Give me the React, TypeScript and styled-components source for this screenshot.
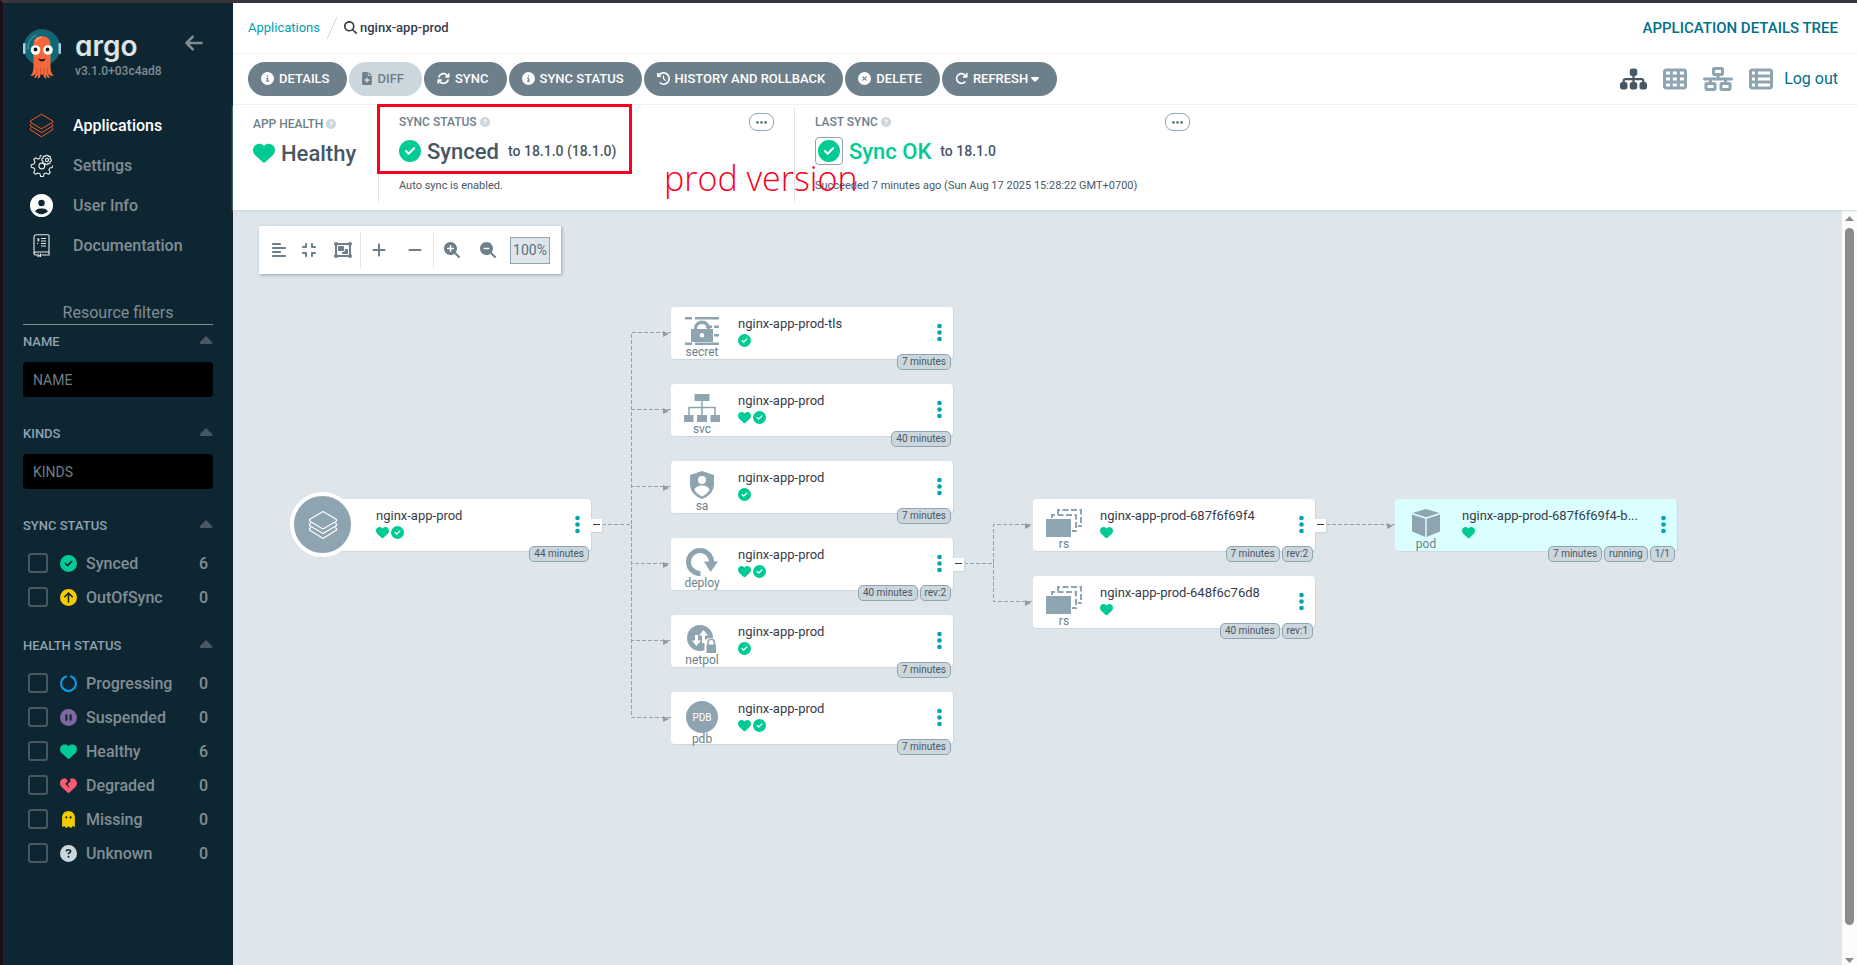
import React, { ReactNode } from 'react';
import styled, { createGlobalStyle } from 'styled-components';
import {
  FaAlignLeft,
  FaArrowLeft,
  FaArrowRotateRight,
  FaArrowsRotate,
  FaCaretDown,
  FaCircleArrowUp,
  FaCircleCheck,
  FaCircleInfo,
  FaCirclePause,
  FaCircleQuestion,
  FaCircleUser,
  FaCircleXmark,
  FaClockRotateLeft,
  FaCompress,
  FaEllipsis,
  FaFileMedical,
  FaGhost,
  FaHeart,
  FaHeartCrack,
  FaMagnifyingGlass,
  FaMagnifyingGlassMinus,
  FaMagnifyingGlassPlus,
  FaMinus,
  FaNetworkWired,
  FaObjectGroup,
  FaPlus,
  FaSitemap,
  FaTableCells,
  FaTableList,
} from 'react-icons/fa6';

const GREEN = '#00cb94';
const SLATE = '#8fa4b1';
const STEEL = '#6d7f8b';
const TEAL = '#00a2b3';

const GlobalStyle = createGlobalStyle`
  * { box-sizing: border-box; }
  body {
    margin: 0;
    font-family: Roboto, "Liberation Sans", sans-serif;
    font-size: 13px;
    color: #363c4a;
    background: #dee6eb;
  }
  button, input { font-family: inherit; }
  svg { flex: none; }
`;

const Page = styled.div`
  display: flex;
  height: 100vh;
  border-top: 3px solid #38353c;
  border-left: 3px solid #1d0f17;
`;

/* ---------- Sidebar ---------- */

const Sidebar = styled.aside`
  flex: none;
  width: 230px;
  padding: 26px 20px 0;
  background: #0e2632;
  color: #818d94;
`;

const Brand = styled.div`
  display: flex;
  height: 50px;
  gap: 14px;
  margin-bottom: 26px;
`;

const BrandText = styled.div`
  flex: 1;
`;

const Wordmark = styled.div`
  font-family: Inter, sans-serif;
  font-feature-settings: "cv11" 1, "ss03" 1;
  font-size: 28px;
  font-weight: 600;
  line-height: 35px;
  color: #dee3e3;
`;

const Version = styled.div`
  font-size: 12px;
  font-weight: 500;
  line-height: 14px;
`;

const CollapseButton = styled.button`
  align-self: flex-start;
  display: flex;
  margin: 4px 9px 0 0;
  padding: 0;
  border: 0;
  background: none;
  color: #818d94;
  font-size: 20px;
`;

const NavLink = styled.a<{ $active?: boolean }>`
  display: flex;
  align-items: center;
  gap: 14px;
  height: 40px;
  font-size: 16px;
  font-weight: 500;
  text-decoration: none;
  color: ${(p) => (p.$active ? '#fff' : '#818d94')};
`;

const NavIcon = styled.span`
  display: flex;
  justify-content: center;
  width: 36px;
  color: #fff;
`;

const FiltersTitle = styled.h2`
  margin: 36px 0 6px;
  border-bottom: 1px solid #818d94;
  font-size: 16px;
  font-weight: 400;
  line-height: 23px;
  text-align: center;
`;

const FilterSection = styled.section<{ $gap: number }>`
  margin-bottom: ${(p) => p.$gap}px;
`;

const FilterHeader = styled.div`
  display: flex;
  justify-content: space-between;
  height: 20px;
  margin-bottom: 11px;
  font-size: 13px;
  font-weight: 500;
  line-height: 22px;
  color: #8fa4b1;
`;

const FilterInput = styled.input`
  display: block;
  width: 100%;
  height: 35px;
  padding: 0 10px;
  border: 0;
  border-radius: 4px;
  background: #000;
  color: #fff;
  font-size: 14px;
  &::placeholder { color: #6d7f8b; opacity: 1; }
`;

const FilterRow = styled.label`
  display: flex;
  align-items: center;
  height: 34px;
  padding: 0 5px;
  font-size: 16px;
  font-weight: 500;
`;

const Checkbox = styled.input`
  appearance: none;
  width: 20px;
  height: 20px;
  margin: 0 12px 0 0;
  border: 2px solid #495763;
  border-radius: 3px;
`;

const FilterIcon = styled.span<{ $color: string }>`
  display: flex;
  justify-content: center;
  width: 17px;
  margin-right: 9px;
  font-size: 17px;
  color: ${(p) => p.$color};
`;

const FilterCount = styled.span`
  margin-left: auto;
`;

/* ---------- Header ---------- */

const Main = styled.main`
  flex: 1;
  display: flex;
  flex-direction: column;
  min-width: 0;
  background: #fff;
`;

const Bar = styled.div`
  display: flex;
  align-items: center;
  justify-content: space-between;
  flex: none;
  height: 51px;
  padding: 0 19px 1px 15px;
  border-bottom: 1px solid #eff3f5;
`;

const Crumbs = styled.nav`
  display: flex;
  align-items: center;
  font-weight: 500;
  color: #363c4a;
`;

const CrumbLink = styled.a`
  color: ${TEAL};
  font-weight: 400;
  text-decoration: none;
`;

const CrumbCurrent = styled.span`
  display: flex;
  align-items: center;
  gap: 3px;
`;

const PageTitle = styled.h1`
  margin: 0;
  font-size: 15px;
  font-weight: 500;
  color: #006f8a;
`;

const Actions = styled.div`
  display: flex;
  gap: 2px;
`;

const ActionButton = styled.button<{ $muted?: boolean; $icon?: number }>`
  display: flex;
  align-items: center;
  gap: 5px;
  height: 34px;
  padding: 0 18px 0 13px;
  border: 0;
  border-radius: 17px;
  background: ${(p) => (p.$muted ? '#ccd6dd' : STEEL)};
  color: ${(p) => (p.$muted ? STEEL : '#fff')};
  font-size: 13px;
  font-weight: 500;
  & > svg { width: ${(p) => p.$icon ?? 13}px; }
`;

const ActionLabel = styled.span`
  display: flex;
  align-items: center;
  gap: 3px;
  svg { width: 8px; }
`;

const Views = styled.div`
  display: flex;
  align-items: center;
  gap: 16px;
`;

const ViewButton = styled.button<{ $icon: number; $active?: boolean }>`
  display: flex;
  padding: 0;
  border: 0;
  background: none;
  color: ${(p) => (p.$active ? '#495763' : SLATE)};
  svg { width: ${(p) => p.$icon}px; height: 24px; }
`;

const LogOut = styled.a`
  margin-left: -5px;
  font-size: 16px;
  color: #006f8a;
  text-decoration: none;
`;

/* ---------- Status panel ---------- */

const StatusPanel = styled.section`
  position: relative;
  z-index: 1;
  flex: none;
  display: flex;
  height: 105px;
  padding: 3px 0 8px 20px;
  box-shadow: 0 1px 2px #ccd6dd;
  background: #fff;
`;

const StatusItem = styled.div<{ $width: number; $top?: number }>`
  position: relative;
  width: ${(p) => p.$width}px;
  padding-top: ${(p) => p.$top ?? 5}px;
  & + & {
    padding-left: 20px;
    border-left: 1px solid #dee6eb;
  }
`;

const StatusLabel = styled.div`
  display: flex;
  align-items: center;
  gap: 3px;
  height: 18px;
  font-size: 12px;
  font-weight: 500;
  color: ${STEEL};
  svg { color: #ccd6dd; font-size: 10px; }
`;

const StatusValue = styled.div<{ $color?: string }>`
  display: flex;
  align-items: center;
  gap: 6px;
  height: 28px;
  margin-top: 6px;
  font-size: 22px;
  font-weight: 500;
  color: ${(p) => p.$color ?? '#495763'};
  white-space: nowrap;
`;

const Revision = styled.span`
  padding-left: 3px;
  font-size: 14px;
  color: #495763;
`;

const StatusNote = styled.div`
  margin-top: 13px;
  font-size: 11px;
  line-height: 16px;
  color: #495763;
`;

const IconFrame = styled.span`
  display: flex;
  align-items: center;
  justify-content: center;
  width: 28px;
  height: 28px;
  border: 1px solid ${SLATE};
  border-radius: 4px;
`;

const MoreButton = styled.button`
  position: absolute;
  top: 5px;
  right: 20px;
  display: flex;
  align-items: center;
  justify-content: center;
  width: 25px;
  height: 18px;
  padding: 0;
  border: 1px solid ${SLATE};
  border-radius: 8px;
  background: #fff;
  color: ${STEEL};
  font-size: 13px;
`;

const Highlight = styled.div`
  position: absolute;
  left: 144px;
  top: -1px;
  width: 255px;
  height: 70px;
  border: 3px solid #fb0021;
`;

const Annotation = styled.div`
  position: absolute;
  left: 431px;
  top: 49px;
  font-family: "Open Sans", "Noto Sans", sans-serif;
  font-size: 34px;
  font-weight: 300;
  line-height: 48px;
  white-space: nowrap;
  color: #fb0021;
`;

/* ---------- Tree canvas ---------- */

const Workspace = styled.div`
  flex: 1;
  display: flex;
  min-height: 0;
`;

const Canvas = styled.div`
  position: relative;
  flex: 1;
  overflow: hidden;
  background: #dee6eb;
`;

const ZoomBar = styled.div`
  display: inline-flex;
  align-items: center;
  height: 48px;
  margin: 16px 26px;
  padding: 0 11px 0 6px;
  background: #fff;
  box-shadow: 1px 1px 3px ${SLATE};
`;

const ZoomGroup = styled.div`
  display: flex;
  & + & { border-left: 1px solid #dee6eb; }
`;

const ToolButton = styled.button<{ $width: number; $icon?: number }>`
  display: flex;
  align-items: center;
  justify-content: center;
  width: ${(p) => p.$width}px;
  height: 36px;
  padding: 0 0 1px;
  border: 0;
  background: none;
  color: ${STEEL};
  svg { width: ${(p) => p.$icon ?? 16}px; height: 16px; }
`;

const ZoomValue = styled.output`
  width: 40px;
  height: 27px;
  margin-left: 4px;
  border: 1px solid ${SLATE};
  background: #dee6eb;
  color: #5d6f7b;
  font-size: 14px;
  line-height: 24px;
  text-align: center;
`;

const Edges = styled.svg`
  position: absolute;
  left: 0;
  top: 0;
`;

const Node = styled.article<{ $x: number; $y: number; $tint?: boolean }>`
  position: absolute;
  left: ${(p) => p.$x}px;
  top: ${(p) => p.$y}px;
  display: flex;
  width: 282px;
  height: 52px;
  border-radius: 4px;
  background: ${(p) => (p.$tint ? '#dbfffe' : '#fff')};
  box-shadow: 1px 1px 1px #ccd6dd;
`;

const KindColumn = styled.div`
  display: flex;
  flex-direction: column;
  align-items: center;
  width: 62px;
  padding-top: 10px;
  font-size: 12px;
  line-height: 14px;
  color: ${STEEL};
`;

const KindIcon = styled.span`
  display: flex;
  align-items: center;
  justify-content: center;
  height: 30px;
`;

const AppCircle = styled.div`
  position: absolute;
  left: -19px;
  top: -7px;
  display: flex;
  align-items: center;
  justify-content: center;
  width: 65px;
  height: 65px;
  border: 4px solid #fff;
  border-radius: 50%;
  background: ${SLATE};
`;

const NodeBody = styled.div<{ $indent: number }>`
  flex: 1;
  min-width: 0;
  padding: 8px 24px 0 ${(p) => p.$indent}px;
`;

const NodeTitle = styled.div`
  white-space: nowrap;
  font-size: 13px;
  line-height: 17px;
  color: #363c4a;
`;

const NodeHealth = styled.div`
  display: flex;
  gap: 2px;
  padding-top: 2px;
  font-size: 13px;
  color: ${GREEN};
`;

const Kebab = styled.button`
  position: absolute;
  right: 9px;
  top: 15px;
  display: flex;
  padding: 0;
  border: 0;
  background: none;
`;

const Expander = styled.button`
  position: absolute;
  left: 282px;
  top: 20px;
  display: flex;
  align-items: center;
  justify-content: center;
  width: 11px;
  height: 13px;
  padding: 0 0 2px;
  border: 0;
  background: #fff;
  box-shadow: 1px 1px 1px #ccd6dd;
  color: #363c4a;
`;

const Tags = styled.div`
  position: absolute;
  right: 2px;
  bottom: -11px;
  display: flex;
  gap: 2px;
`;

const Tag = styled.span`
  height: 16px;
  padding: 0 4px;
  border: 1px solid ${SLATE};
  border-radius: 5px;
  background: #ccd6dd;
  color: #495763;
  font-size: 10px;
  line-height: 14px;
`;

const Scrollbar = styled.div`
  flex: none;
  display: flex;
  flex-direction: column;
  align-items: center;
  justify-content: space-between;
  width: 15px;
  padding: 6px 0 2px;
  background: #fcfcfc;
`;

const Thumb = styled.div`
  flex: 1;
  width: 9px;
  margin: 7px 0 33px;
  border-radius: 5px;
  background: #8b8b8b;
`;

/* ---------- Drawings ---------- */

const Mascot = () => (
  <svg width="38" height="50" viewBox="0 0 38 50">
    <circle cx="19" cy="18.5" r="18" fill="#0d6a75" stroke="#2b5268" strokeWidth="1" />
    <path d="M5 20A14.500 14.500 0 0 1 13 6" fill="none" stroke="#4d9aa3" strokeWidth="1.300" />
    <rect x="0" y="14" width="2.500" height="11" rx="1" fill="#a9cbe6" />
    <rect x="35.500" y="14" width="2.500" height="11" rx="1" fill="#a9cbe6" />
    <path
      d="M19 7c-5 0-8.500 3.500-8.500 8.500V37c0 5-1 8-3 9.500 2 1 4 0 5-2 0 2-.5 3.500-2 4.500 2.500.5 4-1 4.500-3.500.2 1.500 0 3-.5 4 2 0 3-1.500 3-4h3c0 2.500 1 4 3 4-.5-1-.7-2.500-.5-4 .5 2.500 2 4 4.500 3.500-1.500-1-2-2.500-2-4.500 1 2 3 3 5 2-2-1.500-3-4.500-3-9.500V15.500C27.500 10.500 24 7 19 7z"
      fill="#f4693c"
    />
    <path d="M13 12c1-2.500 3-3.500 5-3.500" fill="none" stroke="#fba07f" strokeWidth="1.500" strokeLinecap="round" />
    <path d="M14 39v6M17.500 39v6M21 39v6M24.500 39v6" stroke="#c9431d" strokeWidth=".7" />
    <circle cx="12.500" cy="21" r="4.800" fill="#fff" />
    <circle cx="25" cy="21" r="4.800" fill="#fff" />
    <circle cx="12.500" cy="20.500" r="1.900" fill="#161616" />
    <circle cx="24.500" cy="20.500" r="1.900" fill="#161616" />
    <path d="M15.500 29.500c1.500 1 5.500 1 7 0-.5 4-6.500 4-7 0z" fill="#1d1112" />
  </svg>
);

const Layers = ({ color, width }: { color: string; width: number }) => (
  <svg width={width} height={width} viewBox="0 0 30 30" fill="none" stroke={color} strokeWidth="1.200" strokeLinejoin="round">
    <path d="M15 1.500 28.500 9.500v1.500L15 19 1.500 11V9.500z" />
    <path d="M3 13 1.500 14v1.500L15 23.500l13.500-8V14L27 13" />
    <path d="M3 17.500 1.500 18.500V20L15 28.500 28.500 20v-1.500L27 17.500" />
  </svg>
);

const Gears = () => (
  <svg width="23" height="23" viewBox="0 0 23 23" fill="none" stroke="#e6e9ea" strokeWidth="1.100" strokeLinejoin="round">
    <path d="M8 5.200 5.500 3.800 3.800 5.500 5 8 4 10 1.200 10.700v2.600l2.800.8 1 2L3.700 18.500l1.800 1.800L8 19l2 .8.700 2.700h2.600l.7-2.700 2-.9 2.500 1.400 1.800-1.800L18.900 16l.9-2 2.500-.5v-2" />
    <circle cx="11.800" cy="12" r="2.900" />
    <path d="M8 5.200 9.800 4.300 10.300 1.500h1.200" />
    <circle cx="17" cy="6" r="1.600" />
    <path d="m16.200 1.200 1.600 0 .4 1.300 1.500-.4.900 1.200-.8 1.400 1.500.8v1.400l-1.500.5.500 1.500-1.200 1-1.200-.6-.8 1.400h-1.500l-.5-1.400-1.500.5-1-1.200.7-1.200-1.400-.9V4.800l1.400-.5-.4-1.500 1.200-.9 1.300.6z" />
  </svg>
);

const Manual = () => (
  <svg width="17" height="23" viewBox="0 0 17 23" fill="none" stroke="#e6e9ea" strokeWidth="1.100">
    <path d="M3 .8h12a1 1 0 0 1 1 1V18H3A2 2 0 0 0 1 20V3A2.200 2.200 0 0 1 3 .8z" />
    <path d="M1 19.500c0 1 .8 1.500 2 1.500h1.500m4 0H16v-3" />
    <path d="M5 19.500v3l1.200-.9 1.300.9v-3" />
    <path d="M8 4.500h5M8 7h5M8 9.500h5M8 12h5M4 5h1.800v1.500l-1.200.8M4.700 9v1" />
  </svg>
);

const CaretUp = () => (
  <svg width="14" height="8" viewBox="0 0 14 8" style={{ marginTop: 5 }}>
    <path d="M7 0 13.500 6.500Q13.500 8 12 8H2Q.5 8 .5 6.500z" fill="#495763" />
  </svg>
);

const ProgressRing = () => (
  <svg width="17" height="17" viewBox="0 0 17 17" fill="none" stroke="#0d9de6" strokeWidth="2">
    <path d="M10.300 1.300a7.400 7.400 0 1 1-3.600 0" />
  </svg>
);

const MinusBar = () => (
  <svg width="7" height="1" viewBox="0 0 7 1"><path d="M0 0h7v1H0z" fill="#363c4a" /></svg>
);

const KebabDots = () => (
  <svg width="9" height="20" viewBox="0 0 9 20" fill={TEAL}>
    <circle cx="4.500" cy="4" r="2.300" />
    <circle cx="4.500" cy="10.500" r="2.300" />
    <circle cx="4.500" cy="17" r="2.300" />
  </svg>
);

type Kind = 'secret' | 'svc' | 'sa' | 'deploy' | 'netpol' | 'pdb' | 'rs' | 'pod';

const kindArt: Record<Kind, ReactNode> = {
  secret: (
    <svg width="34" height="28" viewBox="0 0 34 28" fill={SLATE}>
      <path d="M0 0h7v2.500H0zM10 0h24v2.500H10zM0 25.500h7V28H0zM10 25.500h24V28H10zM29 8.500h5V11h-5zM29 17h5v2.500h-5zM21 8.500h6V11h-6z" />
      <path d="M9 12v-1a8 7.500 0 0 1 16 0v1h-3v-.5a5 4.500 0 0 0-10 0v.5z" />
      <path fillRule="evenodd" d="M6 12h22v13H6zm11 4a2.300 2.300 0 1 0 0 4.600 2.300 2.300 0 0 0 0-4.600z" />
    </svg>
  ),
  svc: (
    <svg width="36" height="28" viewBox="0 0 36 28" fill={SLATE}>
      <path d="M10.500 0h15v7h-15zM0 21h9.500v7H0zM13 21h10v7H13zM26.500 21H36v7h-9.500z" />
      <path d="M18 7v14M5 21v-7.500h26V21" fill="none" stroke={SLATE} strokeWidth="1.500" />
    </svg>
  ),
  sa: (
    <svg width="24" height="28" viewBox="0 0 24 28">
      <path d="M12 0 24 4v9c0 8-5.500 12.500-12 15C5.500 25.500 0 21 0 13V4z" fill={SLATE} />
      <circle cx="12" cy="9" r="4" fill="#fff" />
      <path d="M12 14.500c4.500 0 7.500 2.500 7.500 4.500-1.500 3-4.500 5-7.500 6.500-3-1.500-6-3.500-7.500-6.500 0-2 3-4.500 7.500-4.500z" fill="#fff" />
    </svg>
  ),
  deploy: (
    <svg width="32" height="28" viewBox="0 0 32 28">
      <path d="M14.500 25.500A11.500 11.500 0 1 1 25.500 14" fill="none" stroke={SLATE} strokeWidth="5" />
      <path d="M18 13.500h14L24.500 24z" fill={SLATE} />
    </svg>
  ),
  netpol: (
    <svg width="30" height="28" viewBox="0 0 30 28">
      <circle cx="13" cy="13" r="13" fill={SLATE} />
      <path d="M16.500 5 21 10.500h-3V18h-3v-7.500h-3zM9.500 21 5 15.500h3V10h3v5.500h3z" fill="#fff" />
      <path d="M17.500 28V17.500c0-6 12-6 12 0V28z" fill="#fff" />
      <path d="M19.500 19.500h9.500V28h-9.500z" fill={SLATE} />
      <path d="M21 20v-2.500a3.200 3.200 0 0 1 6.400 0V20" fill="none" stroke={SLATE} strokeWidth="1.600" />
    </svg>
  ),
  pdb: (
    <svg width="32" height="32" viewBox="0 0 32 32">
      <circle cx="16" cy="16" r="16" fill={SLATE} />
      <text x="16" y="20" textAnchor="middle" fontSize="10" fill="#fff">PDB</text>
    </svg>
  ),
  rs: (
    <svg width="36" height="28" viewBox="0 0 36 28">
      <path d="M0 10h25v18H0z" fill={SLATE} />
      <g fill="none" stroke={SLATE} strokeWidth="2" strokeDasharray="6 2.500">
        <path d="M6 9V6h24v16h-4" />
        <path d="M12 5V1h23v16h-3" />
      </g>
    </svg>
  ),
  pod: (
    <svg width="28" height="28" viewBox="0 0 28 28" fill={SLATE}>
      <path d="M14 0 27.500 4 14 8.300.5 4zM0 5.500l13.300 4.300V28L0 22.500zM28 5.500 14.700 9.800V28L28 22.500z" />
    </svg>
  ),
};

/* ---------- Data ---------- */

interface NodeData {
  x: number;
  y: number;
  title: string;
  kind?: Kind;
  healthy?: boolean;
  synced?: boolean;
  tags: string[];
  expandable?: boolean;
}

const APP = 'nginx-app-prod';

const nodes: NodeData[] = [
  { x: 76, y: 289, title: APP, healthy: true, synced: true, tags: ['44 minutes'], expandable: true },
  { x: 438, y: 97, title: `${APP}-tls`, kind: 'secret', synced: true, tags: ['7 minutes'] },
  { x: 438, y: 174, title: APP, kind: 'svc', healthy: true, synced: true, tags: ['40 minutes'] },
  { x: 438, y: 251, title: APP, kind: 'sa', synced: true, tags: ['7 minutes'] },
  { x: 438, y: 328, title: APP, kind: 'deploy', healthy: true, synced: true, tags: ['40 minutes', 'rev:2'], expandable: true },
  { x: 438, y: 405, title: APP, kind: 'netpol', synced: true, tags: ['7 minutes'] },
  { x: 438, y: 482, title: APP, kind: 'pdb', healthy: true, synced: true, tags: ['7 minutes'] },
  { x: 800, y: 289, title: `${APP}-687f6f69f4`, kind: 'rs', healthy: true, tags: ['7 minutes', 'rev:2'], expandable: true },
  { x: 800, y: 366, title: `${APP}-648f6c76d8`, kind: 'rs', healthy: true, tags: ['40 minutes', 'rev:1'] },
  { x: 1162, y: 289, title: `${APP}-687f6f69f4-b...`, kind: 'pod', healthy: true, tags: ['7 minutes', 'running', '1/1'] },
];

const edges: [number, number][] = [[0, 1], [0, 2], [0, 3], [0, 4], [0, 5], [0, 6], [4, 7], [4, 8], [7, 9]];

const syncFilters = [
  { label: 'Synced', count: 6, color: GREEN, icon: <FaCircleCheck /> },
  { label: 'OutOfSync', count: 0, color: '#f5cc00', icon: <FaCircleArrowUp /> },
];

const healthFilters = [
  { label: 'Progressing', count: 0, color: '#0d9de6', icon: <ProgressRing /> },
  { label: 'Suspended', count: 0, color: '#8067a0', icon: <FaCirclePause /> },
  { label: 'Healthy', count: 6, color: GREEN, icon: <FaHeart /> },
  { label: 'Degraded', count: 0, color: '#fb5a72', icon: <FaHeartCrack /> },
  { label: 'Missing', count: 0, color: '#f5cc00', icon: <FaGhost /> },
  { label: 'Unknown', count: 0, color: '#ccd6dd', icon: <FaCircleQuestion /> },
];

/* ---------- Components ---------- */

const FilterList = ({ items }: { items: typeof syncFilters }) => (
  <>
    {items.map((f) => (
      <FilterRow key={f.label}>
        <Checkbox type="checkbox" />
        <FilterIcon $color={f.color}>{f.icon}</FilterIcon>
        {f.label}
        <FilterCount>{f.count}</FilterCount>
      </FilterRow>
    ))}
  </>
);

const TreeNode = ({ data }: { data: NodeData }) => (
  <Node $x={data.x} $y={data.y} $tint={data.kind === 'pod'}>
    {data.kind ? (
      <KindColumn>
        <KindIcon>{kindArt[data.kind]}</KindIcon>
        {data.kind}
      </KindColumn>
    ) : (
      <AppCircle>
        <Layers color="#fff" width={30} />
      </AppCircle>
    )}
    <NodeBody $indent={data.kind ? 5 : 67}>
      <NodeTitle>{data.title}</NodeTitle>
      <NodeHealth>
        {data.healthy && <FaHeart />}
        {data.synced && <FaCircleCheck />}
      </NodeHealth>
    </NodeBody>
    <Kebab aria-label="Resource actions"><KebabDots /></Kebab>
    {data.expandable && <Expander aria-label="Collapse children"><MinusBar /></Expander>}
    <Tags>
      {data.tags.map((t) => <Tag key={t}>{t}</Tag>)}
    </Tags>
  </Node>
);

const TreeEdges = () => (
  <Edges width="1240" height="560" fill="none">
    {edges.map(([a, b]) => {
      const x1 = nodes[a].x + 293;
      const y1 = nodes[a].y + 25.5;
      const mid = nodes[a].x + 322.5;
      const x2 = nodes[b].x;
      const y2 = nodes[b].y + 25.5;
      return (
        <g key={`${a}-${b}`}>
          <path d={`M${x1} ${y1}H${mid}V${y2}H${x2}`} stroke={SLATE} strokeDasharray="4 2" />
          <path d={`M${x2 - 8} ${y2 - 1.5}l6 3-6 3z`} fill="#999" />
        </g>
      );
    })}
  </Edges>
);

export default function App() {
  return (
    <>
      <GlobalStyle />
      <Page>
        <Sidebar>
          <Brand>
            <Mascot />
            <BrandText>
              <Wordmark>argo</Wordmark>
              <Version>v3.1.0+03c4ad8</Version>
            </BrandText>
            <CollapseButton aria-label="Collapse sidebar"><FaArrowLeft /></CollapseButton>
          </Brand>
          <nav>
            <NavLink href="#applications" $active>
              <NavIcon><Layers color="#ef5b2f" width={25} /></NavIcon>Applications
            </NavLink>
            <NavLink href="#settings"><NavIcon><Gears /></NavIcon>Settings</NavLink>
            <NavLink href="#user"><NavIcon><FaCircleUser size={23} /></NavIcon>User Info</NavLink>
            <NavLink href="#docs"><NavIcon><Manual /></NavIcon>Documentation</NavLink>
          </nav>
          <FiltersTitle>Resource filters</FiltersTitle>
          <FilterSection $gap={26}>
            <FilterHeader>NAME<CaretUp /></FilterHeader>
            <FilterInput placeholder="NAME" aria-label="Name" />
          </FilterSection>
          <FilterSection $gap={26}>
            <FilterHeader>KINDS<CaretUp /></FilterHeader>
            <FilterInput placeholder="KINDS" aria-label="Kinds" />
          </FilterSection>
          <FilterSection $gap={21}>
            <FilterHeader>SYNC STATUS<CaretUp /></FilterHeader>
            <FilterList items={syncFilters} />
          </FilterSection>
          <FilterSection $gap={0}>
            <FilterHeader>HEALTH STATUS<CaretUp /></FilterHeader>
            <FilterList items={healthFilters} />
          </FilterSection>
        </Sidebar>

        <Main>
          <Bar>
            <Crumbs>
              <CrumbLink href="#applications">Applications</CrumbLink>
              <svg width="24" height="22" viewBox="0 0 24 22"><path d="M7 22 17 0" stroke="#ccd6dd" /></svg>
              <CrumbCurrent><FaMagnifyingGlass />nginx-app-prod</CrumbCurrent>
            </Crumbs>
            <PageTitle>APPLICATION DETAILS TREE</PageTitle>
          </Bar>
          <Bar>
            <Actions>
              <ActionButton><FaCircleInfo />DETAILS</ActionButton>
              <ActionButton $muted $icon={10}><FaFileMedical />DIFF</ActionButton>
              <ActionButton><FaArrowsRotate />SYNC</ActionButton>
              <ActionButton><FaCircleInfo />SYNC STATUS</ActionButton>
              <ActionButton><FaClockRotateLeft />HISTORY AND ROLLBACK</ActionButton>
              <ActionButton><FaCircleXmark />DELETE</ActionButton>
              <ActionButton><FaArrowRotateRight /><ActionLabel>REFRESH<FaCaretDown /></ActionLabel></ActionButton>
            </Actions>
            <Views>
              <ViewButton $icon={27} $active aria-label="Tree"><FaSitemap /></ViewButton>
              <ViewButton $icon={24} aria-label="Pods"><FaTableCells /></ViewButton>
              <ViewButton $icon={30} aria-label="Network"><FaNetworkWired /></ViewButton>
              <ViewButton $icon={24} aria-label="List"><FaTableList /></ViewButton>
              <LogOut href="#logout">Log out</LogOut>
            </Views>
          </Bar>

          <StatusPanel>
            <StatusItem $width={125} $top={7}>
              <StatusLabel>APP HEALTH <FaCircleQuestion /></StatusLabel>
              <StatusValue><FaHeart color={GREEN} />Healthy</StatusValue>
            </StatusItem>
            <StatusItem $width={416}>
              <StatusLabel>SYNC STATUS <FaCircleQuestion /></StatusLabel>
              <StatusValue><FaCircleCheck color={GREEN} />Synced<Revision>to 18.1.0 (18.1.0)</Revision></StatusValue>
              <StatusNote>Auto sync is enabled.</StatusNote>
              <MoreButton aria-label="More"><FaEllipsis /></MoreButton>
            </StatusItem>
            <StatusItem $width={416}>
              <StatusLabel>LAST SYNC <FaCircleQuestion /></StatusLabel>
              <StatusValue $color={GREEN}>
                <IconFrame><FaCircleCheck /></IconFrame>Sync OK<Revision>to 18.1.0</Revision>
              </StatusValue>
              <StatusNote>Succeeded 7 minutes ago (Sun Aug 17 2025 15:28:22 GMT+0700)</StatusNote>
              <MoreButton aria-label="More"><FaEllipsis /></MoreButton>
            </StatusItem>
            <Highlight />
            <Annotation>prod version</Annotation>
          </StatusPanel>

          <Workspace>
            <Canvas>
              <TreeEdges />
              <ZoomBar>
                <ZoomGroup>
                  <ToolButton $width={28} aria-label="Align"><FaAlignLeft /></ToolButton>
                  <ToolButton $width={32} aria-label="Compact"><FaCompress /></ToolButton>
                  <ToolButton $width={35} $icon={18} aria-label="Group"><FaObjectGroup /></ToolButton>
                </ZoomGroup>
                <ZoomGroup>
                  <ToolButton $width={36} aria-label="Expand all"><FaPlus /></ToolButton>
                  <ToolButton $width={36} aria-label="Collapse all"><FaMinus /></ToolButton>
                </ZoomGroup>
                <ZoomGroup>
                  <ToolButton $width={36} aria-label="Zoom in"><FaMagnifyingGlassPlus /></ToolButton>
                  <ToolButton $width={36} aria-label="Zoom out"><FaMagnifyingGlassMinus /></ToolButton>
                </ZoomGroup>
                <ZoomValue>100%</ZoomValue>
              </ZoomBar>
              {nodes.map((n) => <TreeNode key={`${n.x}-${n.y}`} data={n} />)}
            </Canvas>
            <Scrollbar>
              <svg width="9" height="5" viewBox="0 0 9 5"><path d="M4.500 0 9 5H0z" fill="#8b8b8b" /></svg>
              <Thumb />
              <svg width="9" height="5" viewBox="0 0 9 5"><path d="M4.500 5 9 0H0z" fill="#8b8b8b" /></svg>
            </Scrollbar>
          </Workspace>
        </Main>
      </Page>
    </>
  );
}
